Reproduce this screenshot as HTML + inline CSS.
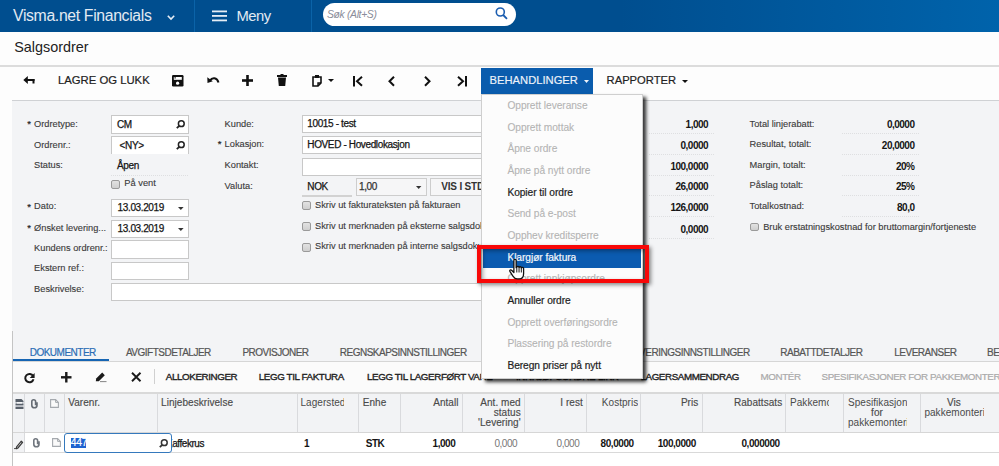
<!DOCTYPE html>
<html><head><meta charset="utf-8"><style>
html,body{margin:0;padding:0;}
body{width:999px;height:466px;overflow:hidden;position:relative;background:#fdfdfd;font-family:"Liberation Sans",sans-serif;}
.t{position:absolute;line-height:1;white-space:nowrap;}
svg{overflow:visible}
</style></head><body>
<div style="position:absolute;left:0px;top:0px;width:999px;height:32px;background:linear-gradient(to right,#004e8f 0px,#004e8f 620px,#0063ab 999px);"></div>
<div style="position:absolute;left:193.8px;top:0px;width:1.5px;height:32px;background:#0b63a8;"></div>
<div style="position:absolute;left:310.8px;top:0px;width:1.5px;height:32px;background:#0b63a8;"></div>
<div class="t" style="top:8.13px;font-size:15.8px;color:#e2eaf3;letter-spacing:-0.35px;left:13px;">Visma.net Financials</div>
<svg style="position:absolute;left:167px;top:15px" width="8" height="5" viewBox="0 0 8 5"><path d="M0.8 0.8 L4 4 L7.2 0.8" fill="none" stroke="#e6edf5" stroke-width="1.6"/></svg>
<svg style="position:absolute;left:212px;top:10px" width="15" height="12" viewBox="0 0 15 12"><rect x="0" y="0.5" width="15" height="1.8" fill="#e6edf5"/><rect x="0" y="5" width="15" height="1.8" fill="#e6edf5"/><rect x="0" y="9.5" width="15" height="1.8" fill="#e6edf5"/></svg>
<div class="t" style="top:9.47px;font-size:14.8px;color:#e2eaf3;letter-spacing:-0.5px;left:236.5px;">Meny</div>
<div style="position:absolute;left:323px;top:3px;width:193px;height:23px;background:#fff;border-radius:12px;"></div>
<div class="t" style="top:9.50px;font-size:10.4px;color:#8a8d99;letter-spacing:-0.35px;font-style:italic;left:327px;">Søk (Alt+S)</div>
<svg style="position:absolute;left:495px;top:7px" width="14" height="13" viewBox="0 0 14 13"><circle cx="5.3" cy="5" r="4" fill="none" stroke="#1b5db0" stroke-width="1.6"/><path d="M8.2 8 L12 11.8" stroke="#1b5db0" stroke-width="1.8"/></svg>
<div class="t" style="top:40.41px;font-size:14.4px;color:#222;left:14.2px;">Salgsordrer</div>
<div style="position:absolute;left:0px;top:65px;width:999px;height:2px;background:#dcdcdc;"></div>
<svg style="position:absolute;left:22.5px;top:76px" width="12" height="9" viewBox="0 0 12 9"><path d="M0.3 4 L4.8 0 V8 Z" fill="#111"/><rect x="3.5" y="3" width="8" height="2" fill="#111"/><rect x="9.5" y="3" width="2" height="4.5" fill="#111"/></svg>
<div class="t" style="top:75.23px;font-size:11.3px;color:#222;left:58px;-webkit-text-stroke:0.2px #222;">LAGRE OG LUKK</div>
<svg style="position:absolute;left:171.5px;top:75px" width="11.5" height="11.5" viewBox="0 0 11.5 11.5"><rect x="0" y="0" width="11.5" height="11.5" rx="1.2" fill="#111"/><rect x="1.8" y="2" width="8" height="2.8" fill="#fff"/><rect x="2.6" y="1.6" width="1" height="2" fill="#111"/><circle cx="5.6" cy="8.2" r="1.6" fill="#fff"/></svg>
<svg style="position:absolute;left:206.5px;top:76.3px" width="12.5" height="8" viewBox="0 0 12.5 8"><path d="M3 4.5 C5 1.2 10 1 11.5 6.5" fill="none" stroke="#111" stroke-width="2"/><path d="M0.3 1.2 L0.5 7 L5.8 5.2 Z" fill="#111"/></svg>
<svg style="position:absolute;left:242px;top:74.8px" width="11" height="11" viewBox="0 0 11 11"><rect x="4.2" y="0" width="2.6" height="11" fill="#111"/><rect x="0" y="4.2" width="11" height="2.6" fill="#111"/></svg>
<svg style="position:absolute;left:276.5px;top:74px" width="10" height="12" viewBox="0 0 10 12"><rect x="0" y="1" width="10" height="2" fill="#111"/><rect x="3.5" y="0" width="3" height="2" fill="#111"/><path d="M1 3.5 H9 L8.2 12 H1.8 Z" fill="#111"/></svg>
<svg style="position:absolute;left:311.5px;top:74.7px" width="10" height="11.5" viewBox="0 0 10 11.5"><path d="M1 2 H9 V8 L6 11 H1 Z" fill="none" stroke="#111" stroke-width="1.6"/><rect x="3" y="0" width="4" height="3" fill="#111"/><path d="M6 11 V8 H9" fill="none" stroke="#111" stroke-width="1.4"/></svg>
<svg style="position:absolute;left:328px;top:79px" width="6" height="3" viewBox="0 0 6 3"><path d="M0 0 H6 L3 3 Z" fill="#111"/></svg>
<svg style="position:absolute;left:353px;top:75.8px" width="10" height="10.5" viewBox="0 0 10 10.5"><rect x="0" y="0" width="2" height="10.5" fill="#111"/><path d="M9 0.8 L4 5.25 L9 9.7" fill="none" stroke="#111" stroke-width="2"/></svg>
<svg style="position:absolute;left:387.5px;top:75.8px" width="7" height="10.5" viewBox="0 0 7 10.5"><path d="M6 0.8 L1.5 5.25 L6 9.7" fill="none" stroke="#111" stroke-width="2"/></svg>
<svg style="position:absolute;left:423.5px;top:75.8px" width="7" height="10.5" viewBox="0 0 7 10.5"><path d="M1 0.8 L5.5 5.25 L1 9.7" fill="none" stroke="#111" stroke-width="2"/></svg>
<svg style="position:absolute;left:457px;top:75.8px" width="10" height="10.5" viewBox="0 0 10 10.5"><rect x="8" y="0" width="2" height="10.5" fill="#111"/><path d="M1 0.8 L6 5.25 L1 9.7" fill="none" stroke="#111" stroke-width="2"/></svg>
<div style="position:absolute;left:481px;top:68px;width:112px;height:26px;background:#0a5cad;"></div>
<div class="t" style="top:75.12px;font-size:11.2px;color:#eef3fa;left:489.6px;-webkit-text-stroke:0.15px #eef3fa;">BEHANDLINGER</div>
<svg style="position:absolute;left:584px;top:80px" width="5" height="3" viewBox="0 0 5 3"><path d="M0 0 H5 L2.5 3 Z" fill="#eef3fa"/></svg>
<div class="t" style="top:75.12px;font-size:11.2px;color:#222;left:606.6px;-webkit-text-stroke:0.2px #222;">RAPPORTER</div>
<svg style="position:absolute;left:681.5px;top:80px" width="6" height="3" viewBox="0 0 6 3"><path d="M0 0 H6 L3 3 Z" fill="#111"/></svg>
<div style="position:absolute;left:12px;top:100px;width:987px;height:366px;background:#f3f4f6;"></div>
<div style="position:absolute;left:12px;top:100px;width:987px;height:1px;background:#cfd1d4;"></div>
<div class="t" style="top:118.96px;font-size:9.5px;color:#222;left:27.2px;-webkit-text-stroke:0.2px #222;">*</div>
<div class="t" style="top:119.57px;font-size:9.25px;color:#3a3a3a;left:34.1px;-webkit-text-stroke:0.12px #3a3a3a;">Ordretype:</div>
<div class="t" style="top:140.77px;font-size:9.25px;color:#3a3a3a;left:34.1px;-webkit-text-stroke:0.12px #3a3a3a;">Ordrenr.:</div>
<div class="t" style="top:161.17px;font-size:9.25px;color:#3a3a3a;left:34.1px;-webkit-text-stroke:0.12px #3a3a3a;">Status:</div>
<div class="t" style="top:201.86px;font-size:9.5px;color:#222;left:27.2px;-webkit-text-stroke:0.2px #222;">*</div>
<div class="t" style="top:202.47px;font-size:9.25px;color:#3a3a3a;left:34.1px;-webkit-text-stroke:0.12px #3a3a3a;">Dato:</div>
<div class="t" style="top:223.06px;font-size:9.5px;color:#222;left:27.2px;-webkit-text-stroke:0.2px #222;">*</div>
<div class="t" style="top:223.67px;font-size:9.25px;color:#3a3a3a;left:34.1px;-webkit-text-stroke:0.12px #3a3a3a;">Ønsket levering...</div>
<div class="t" style="top:243.97px;font-size:9.25px;color:#3a3a3a;left:34.1px;-webkit-text-stroke:0.12px #3a3a3a;">Kundens ordrenr.:</div>
<div class="t" style="top:264.17px;font-size:9.25px;color:#3a3a3a;left:34.1px;-webkit-text-stroke:0.12px #3a3a3a;">Ekstern ref.:</div>
<div class="t" style="top:285.47px;font-size:9.25px;color:#3a3a3a;left:34.1px;-webkit-text-stroke:0.12px #3a3a3a;">Beskrivelse:</div>
<div style="position:absolute;left:111px;top:115px;width:78px;height:19px;background:#fff;border:1px solid #c8c8c8;box-sizing:border-box;"></div>
<div class="t" style="top:119.84px;font-size:10px;color:#141414;letter-spacing:-0.37px;left:117px;-webkit-text-stroke:0.25px #141414;">CM</div>
<svg style="position:absolute;left:176px;top:120px" width="9" height="9" viewBox="0 0 9 9"><circle cx="5.3" cy="3.7" r="2.9" fill="none" stroke="#222" stroke-width="1.5"/><path d="M3.2 5.8 L0.8 8.2" stroke="#222" stroke-width="1.8"/></svg>
<div style="position:absolute;left:111px;top:136px;width:78px;height:18px;background:#fff;border:1px solid #c8c8c8;border-bottom:none;box-sizing:border-box;"></div>
<div class="t" style="top:140.73px;font-size:10px;color:#141414;letter-spacing:-0.37px;left:119.6px;-webkit-text-stroke:0.25px #141414;">&lt;NY&gt;</div>
<svg style="position:absolute;left:176px;top:140.5px" width="9" height="9" viewBox="0 0 9 9"><circle cx="5.3" cy="3.7" r="2.9" fill="none" stroke="#222" stroke-width="1.5"/><path d="M3.2 5.8 L0.8 8.2" stroke="#222" stroke-width="1.8"/></svg>
<div class="t" style="top:161.34px;font-size:10px;color:#141414;letter-spacing:-0.37px;left:117px;-webkit-text-stroke:0.25px #141414;">Åpen</div>
<div style="position:absolute;left:111px;top:175px;width:78px;height:1px;background-image:linear-gradient(to right,#dedfe1 50%,transparent 50%);background-size:2px 1px;"></div>
<div style="position:absolute;left:111px;top:180px;width:9px;height:8.5px;border:1px solid #9a9a9a;border-radius:2px;background:linear-gradient(#e2e2e2,#cfcfcf);box-sizing:border-box;"></div>
<div class="t" style="top:179.33px;font-size:9.3px;color:#3a3a3a;left:124.3px;-webkit-text-stroke:0.12px #3a3a3a;">På vent</div>
<div style="position:absolute;left:111px;top:199px;width:78px;height:18px;background:#fff;border:1px solid #c8c8c8;box-sizing:border-box;"></div>
<div class="t" style="top:202.53px;font-size:10px;color:#141414;letter-spacing:-0.37px;left:117.6px;-webkit-text-stroke:0.25px #141414;">13.03.2019</div>
<svg style="position:absolute;left:177.7px;top:207.3px" width="5.6" height="3" viewBox="0 0 5.6 3"><path d="M0 0 H5.6 L2.8 3 Z" fill="#333"/></svg>
<div style="position:absolute;left:111px;top:220px;width:78px;height:18px;background:#fff;border:1px solid #c8c8c8;box-sizing:border-box;"></div>
<div class="t" style="top:223.53px;font-size:10px;color:#141414;letter-spacing:-0.37px;left:117.6px;-webkit-text-stroke:0.25px #141414;">13.03.2019</div>
<svg style="position:absolute;left:177.7px;top:228.3px" width="5.6" height="3" viewBox="0 0 5.6 3"><path d="M0 0 H5.6 L2.8 3 Z" fill="#333"/></svg>
<div style="position:absolute;left:111px;top:240px;width:78px;height:19px;background:#fff;border:1px solid #c8c8c8;box-sizing:border-box;"></div>
<div style="position:absolute;left:111px;top:262px;width:78px;height:18px;background:#fff;border:1px solid #c8c8c8;box-sizing:border-box;"></div>
<div style="position:absolute;left:111px;top:283px;width:532px;height:18px;background:#fff;border:1px solid #c8c8c8;box-sizing:border-box;"></div>
<div class="t" style="top:119.97px;font-size:9.25px;color:#3a3a3a;left:224.6px;-webkit-text-stroke:0.12px #3a3a3a;">Kunde:</div>
<div class="t" style="top:139.46px;font-size:9.5px;color:#222;left:217.79999999999998px;-webkit-text-stroke:0.2px #222;">*</div>
<div class="t" style="top:140.07px;font-size:9.25px;color:#3a3a3a;left:224.6px;-webkit-text-stroke:0.12px #3a3a3a;">Lokasjon:</div>
<div class="t" style="top:161.07px;font-size:9.25px;color:#3a3a3a;left:224.6px;-webkit-text-stroke:0.12px #3a3a3a;">Kontakt:</div>
<div class="t" style="top:182.07px;font-size:9.25px;color:#3a3a3a;left:224.6px;-webkit-text-stroke:0.12px #3a3a3a;">Valuta:</div>
<div style="position:absolute;left:302px;top:115px;width:340px;height:18px;background:#fff;border:1px solid #c8c8c8;box-sizing:border-box;"></div>
<div class="t" style="top:119.33px;font-size:10px;color:#141414;letter-spacing:-0.37px;left:307.3px;-webkit-text-stroke:0.25px #141414;">10015 - test</div>
<div style="position:absolute;left:302px;top:136px;width:340px;height:18px;background:#fff;border:1px solid #c8c8c8;box-sizing:border-box;"></div>
<div class="t" style="top:140.34px;font-size:10px;color:#141414;letter-spacing:-0.37px;left:307.3px;-webkit-text-stroke:0.25px #141414;">HOVED - Hovedlokasjon</div>
<div style="position:absolute;left:302px;top:158px;width:340px;height:18px;background:#fff;border:1px solid #c8c8c8;box-sizing:border-box;"></div>
<div class="t" style="top:182.13px;font-size:10px;color:#141414;letter-spacing:-0.37px;left:307.3px;-webkit-text-stroke:0.25px #141414;">NOK</div>
<div style="position:absolute;left:302px;top:195px;width:50px;height:1.5px;background:#d2d2d2;"></div>
<div style="position:absolute;left:356px;top:177.5px;width:71px;height:18.5px;background:#f6f6f7;border:1px solid #cdcdcd;box-sizing:border-box;"></div>
<div class="t" style="top:181.53px;font-size:10px;color:#333;letter-spacing:-0.37px;left:359px;-webkit-text-stroke:0.25px #333;">1,00</div>
<svg style="position:absolute;left:416.3px;top:185.5px" width="5.4" height="3" viewBox="0 0 5.4 3"><path d="M0 0 H5.4 L2.7 3 Z" fill="#333"/></svg>
<div style="position:absolute;left:430px;top:177.5px;width:120px;height:18.5px;background:#f6f6f7;border:1px solid #cdcdcd;box-sizing:border-box;"></div>
<div class="t" style="top:181.84px;font-size:10px;color:#333;font-weight:bold;letter-spacing:-0.2px;left:441.3px;">VIS I STD</div>
<div style="position:absolute;left:302px;top:201px;width:9px;height:8.5px;border:1px solid #9a9a9a;border-radius:2px;background:linear-gradient(#e2e2e2,#cfcfcf);box-sizing:border-box;"></div>
<div class="t" style="top:200.77px;font-size:9.25px;color:#3a3a3a;left:315px;-webkit-text-stroke:0.12px #3a3a3a;">Skriv ut fakturateksten på fakturaen</div>
<div style="position:absolute;left:302px;top:222px;width:9px;height:8.5px;border:1px solid #9a9a9a;border-radius:2px;background:linear-gradient(#e2e2e2,#cfcfcf);box-sizing:border-box;"></div>
<div class="t" style="top:221.77px;font-size:9.25px;color:#3a3a3a;left:315px;-webkit-text-stroke:0.12px #3a3a3a;">Skriv ut merknaden på eksterne salgsdokumenter</div>
<div style="position:absolute;left:302px;top:243px;width:9px;height:8.5px;border:1px solid #9a9a9a;border-radius:2px;background:linear-gradient(#e2e2e2,#cfcfcf);box-sizing:border-box;"></div>
<div class="t" style="top:242.27px;font-size:9.25px;color:#3a3a3a;left:315px;-webkit-text-stroke:0.12px #3a3a3a;">Skriv ut merknaden på interne salgsdokumenter</div>
<div class="t" style="top:120.03px;font-size:10px;color:#141414;font-weight:bold;letter-spacing:-0.5px;right:290.9px;text-align:right;">1,000</div>
<div class="t" style="top:140.94px;font-size:10px;color:#141414;font-weight:bold;letter-spacing:-0.5px;right:290.9px;text-align:right;">0,0000</div>
<div class="t" style="top:161.74px;font-size:10px;color:#141414;font-weight:bold;letter-spacing:-0.5px;right:290.9px;text-align:right;">100,0000</div>
<div class="t" style="top:182.03px;font-size:10px;color:#141414;font-weight:bold;letter-spacing:-0.5px;right:290.9px;text-align:right;">26,0000</div>
<div class="t" style="top:203.24px;font-size:10px;color:#141414;font-weight:bold;letter-spacing:-0.5px;right:290.9px;text-align:right;">126,0000</div>
<div class="t" style="top:224.94px;font-size:10px;color:#141414;font-weight:bold;letter-spacing:-0.5px;right:290.9px;text-align:right;">0,0000</div>
<div style="position:absolute;left:649px;top:133px;width:65px;height:1px;background-image:linear-gradient(to right,#dedfe1 50%,transparent 50%);background-size:2px 1px;"></div>
<div style="position:absolute;left:649px;top:154px;width:65px;height:1px;background-image:linear-gradient(to right,#dedfe1 50%,transparent 50%);background-size:2px 1px;"></div>
<div style="position:absolute;left:649px;top:175px;width:65px;height:1px;background-image:linear-gradient(to right,#dedfe1 50%,transparent 50%);background-size:2px 1px;"></div>
<div style="position:absolute;left:649px;top:195px;width:65px;height:1px;background-image:linear-gradient(to right,#dedfe1 50%,transparent 50%);background-size:2px 1px;"></div>
<div style="position:absolute;left:649px;top:216px;width:65px;height:1px;background-image:linear-gradient(to right,#dedfe1 50%,transparent 50%);background-size:2px 1px;"></div>
<div style="position:absolute;left:649px;top:238px;width:65px;height:1px;background-image:linear-gradient(to right,#dedfe1 50%,transparent 50%);background-size:2px 1px;"></div>
<div class="t" style="top:119.67px;font-size:9.25px;color:#3a3a3a;left:749.6px;-webkit-text-stroke:0.12px #3a3a3a;">Total linjerabatt:</div>
<div class="t" style="top:139.97px;font-size:9.25px;color:#3a3a3a;left:749.6px;-webkit-text-stroke:0.12px #3a3a3a;">Resultat, totalt:</div>
<div class="t" style="top:161.17px;font-size:9.25px;color:#3a3a3a;left:749.6px;-webkit-text-stroke:0.12px #3a3a3a;">Margin, totalt:</div>
<div class="t" style="top:181.47px;font-size:9.25px;color:#3a3a3a;left:749.6px;-webkit-text-stroke:0.12px #3a3a3a;">Påslag totalt:</div>
<div class="t" style="top:202.27px;font-size:9.25px;color:#3a3a3a;left:749.6px;-webkit-text-stroke:0.12px #3a3a3a;">Totalkostnad:</div>
<div class="t" style="top:120.03px;font-size:10px;color:#141414;font-weight:bold;letter-spacing:-0.5px;right:84.5px;text-align:right;">0,0000</div>
<div class="t" style="top:140.94px;font-size:10px;color:#141414;font-weight:bold;letter-spacing:-0.5px;right:84.5px;text-align:right;">20,0000</div>
<div class="t" style="top:161.74px;font-size:10px;color:#141414;font-weight:bold;letter-spacing:-0.5px;right:84.5px;text-align:right;">20%</div>
<div class="t" style="top:182.03px;font-size:10px;color:#141414;font-weight:bold;letter-spacing:-0.5px;right:84.5px;text-align:right;">25%</div>
<div class="t" style="top:203.24px;font-size:10px;color:#141414;font-weight:bold;letter-spacing:-0.5px;right:84.5px;text-align:right;">80,0</div>
<div style="position:absolute;left:842px;top:133px;width:77px;height:1px;background-image:linear-gradient(to right,#dedfe1 50%,transparent 50%);background-size:2px 1px;"></div>
<div style="position:absolute;left:842px;top:154px;width:77px;height:1px;background-image:linear-gradient(to right,#dedfe1 50%,transparent 50%);background-size:2px 1px;"></div>
<div style="position:absolute;left:842px;top:175px;width:77px;height:1px;background-image:linear-gradient(to right,#dedfe1 50%,transparent 50%);background-size:2px 1px;"></div>
<div style="position:absolute;left:842px;top:195px;width:77px;height:1px;background-image:linear-gradient(to right,#dedfe1 50%,transparent 50%);background-size:2px 1px;"></div>
<div style="position:absolute;left:842px;top:216px;width:77px;height:1px;background-image:linear-gradient(to right,#dedfe1 50%,transparent 50%);background-size:2px 1px;"></div>
<div style="position:absolute;left:749.6px;top:222.5px;width:9px;height:8.5px;border:1px solid #9a9a9a;border-radius:2px;background:linear-gradient(#e2e2e2,#cfcfcf);box-sizing:border-box;"></div>
<div class="t" style="top:222.57px;font-size:9.25px;color:#3a3a3a;left:763.2px;-webkit-text-stroke:0.12px #3a3a3a;">Bruk erstatningskostnad for bruttomargin/fortjeneste</div>
<div style="position:absolute;left:12px;top:331px;width:1px;height:135px;background:#c4c4c4;"></div>
<div class="t" style="top:348.14px;font-size:10px;color:#2a6db5;letter-spacing:-0.5px;left:29.7px;-webkit-text-stroke:0.2px #2a6db5;">DOKUMENTER</div>
<div style="position:absolute;left:13px;top:358.6px;width:96px;height:2.8px;background:#1665b3;"></div>
<div style="position:absolute;left:13px;top:361px;width:986px;height:1px;background:#d6d6d6;"></div>
<div class="t" style="top:348.14px;font-size:10px;color:#555;letter-spacing:-0.5px;left:125.9px;-webkit-text-stroke:0.2px #555;">AVGIFTSDETALJER</div>
<div class="t" style="top:348.14px;font-size:10px;color:#555;letter-spacing:-0.5px;left:242.4px;-webkit-text-stroke:0.2px #555;">PROVISJONER</div>
<div class="t" style="top:348.14px;font-size:10px;color:#555;letter-spacing:-0.5px;left:339.8px;-webkit-text-stroke:0.2px #555;">REGNSKAPSINNSTILLINGER</div>
<div class="t" style="top:348.14px;font-size:10px;color:#555;letter-spacing:-0.5px;right:249.29999999999995px;text-align:right;-webkit-text-stroke:0.2px #555;">LEVERINGSINNSTILLINGER</div>
<div class="t" style="top:348.14px;font-size:10px;color:#555;letter-spacing:-0.5px;left:780.3px;-webkit-text-stroke:0.2px #555;">RABATTDETALJER</div>
<div class="t" style="top:348.14px;font-size:10px;color:#555;letter-spacing:-0.5px;left:894.3px;-webkit-text-stroke:0.2px #555;">LEVERANSER</div>
<div class="t" style="top:348.14px;font-size:10px;color:#555;letter-spacing:-0.5px;left:987px;-webkit-text-stroke:0.2px #555;">BETALINGER</div>
<div style="position:absolute;left:13px;top:362px;width:986px;height:30px;background:#fbfbfb;"></div>
<svg style="position:absolute;left:23.5px;top:372.5px" width="11" height="10" viewBox="0 0 11 10"><path d="M9.1 3 A4.2 4.2 0 1 0 9.5 6.3" fill="none" stroke="#1a1a1a" stroke-width="2"/><path d="M10.6 0 V4.9 H5.7 Z" fill="#1a1a1a"/></svg>
<svg style="position:absolute;left:60.5px;top:371.5px" width="10.5" height="10.5" viewBox="0 0 10.5 10.5"><rect x="4.1" y="0" width="2.4" height="10.5" fill="#1a1a1a"/><rect x="0" y="4.1" width="10.5" height="2.4" fill="#1a1a1a"/></svg>
<svg style="position:absolute;left:94.5px;top:372px" width="12" height="10" viewBox="0 0 12 10"><path d="M0.8 9.3 L1.2 6.6 L7.2 0.6 L9.8 3.2 L3.8 9.2 Z" fill="#1a1a1a"/><rect x="5" y="9.2" width="6.5" height="0.9" fill="#777"/></svg>
<svg style="position:absolute;left:131px;top:372px" width="10.5" height="10" viewBox="0 0 10.5 10"><path d="M1 0.8 L9.5 9.2 M9.5 0.8 L1 9.2" stroke="#1a1a1a" stroke-width="1.9"/></svg>
<div style="position:absolute;left:154px;top:369px;width:1px;height:15px;background:#d0d0d0;"></div>
<div class="t" style="top:372.30px;font-size:9.8px;color:#222;letter-spacing:-0.4px;left:165.8px;-webkit-text-stroke:0.35px #222;">ALLOKERINGER</div>
<div class="t" style="top:372.30px;font-size:9.8px;color:#222;letter-spacing:-0.4px;left:258.8px;-webkit-text-stroke:0.35px #222;">LEGG TIL FAKTURA</div>
<div class="t" style="top:372.30px;font-size:9.8px;color:#222;letter-spacing:-0.4px;left:367px;-webkit-text-stroke:0.35px #222;">LEGG TIL LAGERFØRT VARE</div>
<div class="t" style="top:372.30px;font-size:9.8px;color:#222;letter-spacing:-0.4px;left:516px;-webkit-text-stroke:0.35px #222;">INNKJØPSORDRE-LINK</div>
<div class="t" style="top:372.30px;font-size:9.8px;color:#222;letter-spacing:-0.4px;right:260px;text-align:right;-webkit-text-stroke:0.35px #222;">LAGERSAMMENDRAG</div>
<div class="t" style="top:372.30px;font-size:9.8px;color:#aaa;letter-spacing:-0.4px;left:760.5px;-webkit-text-stroke:0.2px #aaa;">MONTÉR</div>
<div class="t" style="top:372.30px;font-size:9.8px;color:#aaa;letter-spacing:-0.4px;left:821.6px;-webkit-text-stroke:0.2px #aaa;">SPESIFIKASJONER FOR PAKKEMONTER</div>
<div style="position:absolute;left:13px;top:392px;width:986px;height:2px;background:#d9d9d9;"></div>
<div style="position:absolute;left:13px;top:394px;width:986px;height:38px;background:#f2f3f5;"></div>
<div style="position:absolute;left:13px;top:432px;width:986px;height:1px;background:#d6d6d6;"></div>
<div style="position:absolute;left:13px;top:433px;width:986px;height:19px;background:#fff;"></div>
<div style="position:absolute;left:13px;top:452px;width:986px;height:1px;background:#d9d9d9;"></div>
<div style="position:absolute;left:13px;top:453px;width:986px;height:13px;background:#fff;"></div>
<div style="position:absolute;left:24px;top:394px;width:1px;height:38px;background:#d9dadd;"></div>
<div style="position:absolute;left:44px;top:394px;width:1px;height:38px;background:#d9dadd;"></div>
<div style="position:absolute;left:64px;top:394px;width:1px;height:38px;background:#d9dadd;"></div>
<div style="position:absolute;left:157px;top:394px;width:1px;height:38px;background:#d9dadd;"></div>
<div style="position:absolute;left:297px;top:394px;width:1px;height:38px;background:#d9dadd;"></div>
<div style="position:absolute;left:358px;top:394px;width:1px;height:38px;background:#d9dadd;"></div>
<div style="position:absolute;left:400px;top:394px;width:1px;height:38px;background:#d9dadd;"></div>
<div style="position:absolute;left:462px;top:394px;width:1px;height:38px;background:#d9dadd;"></div>
<div style="position:absolute;left:524px;top:394px;width:1px;height:38px;background:#d9dadd;"></div>
<div style="position:absolute;left:586px;top:394px;width:1px;height:38px;background:#d9dadd;"></div>
<div style="position:absolute;left:640px;top:394px;width:1px;height:38px;background:#d9dadd;"></div>
<div style="position:absolute;left:702px;top:394px;width:1px;height:38px;background:#d9dadd;"></div>
<div style="position:absolute;left:785px;top:394px;width:1px;height:38px;background:#d9dadd;"></div>
<div style="position:absolute;left:843px;top:394px;width:1px;height:38px;background:#d9dadd;"></div>
<div style="position:absolute;left:920px;top:394px;width:1px;height:38px;background:#d9dadd;"></div>
<div class="t" style="top:398.04px;font-size:10px;color:#4a4a4a;letter-spacing:0.05px;left:68.2px;-webkit-text-stroke:0.15px #4a4a4a;">Varenr.</div>
<div class="t" style="top:398.04px;font-size:10px;color:#4a4a4a;letter-spacing:0.05px;left:161.1px;-webkit-text-stroke:0.15px #4a4a4a;">Linjebeskrivelse</div>
<div style="position:absolute;left:298px;top:398.04px;width:46px;height:13.0px;overflow:hidden;"><div style="position:absolute;top:0;left:2.5px;line-height:1;white-space:nowrap;font-size:10px;color:#4a4a4a;letter-spacing:0.05px;">Lagersted</div></div>
<div class="t" style="top:398.04px;font-size:10px;color:#4a4a4a;letter-spacing:0.05px;left:362.7px;-webkit-text-stroke:0.15px #4a4a4a;">Enhe</div>
<div class="t" style="top:398.04px;font-size:10px;color:#4a4a4a;letter-spacing:0.05px;right:540.5px;text-align:right;-webkit-text-stroke:0.15px #4a4a4a;">Antall</div>
<div class="t" style="top:397.84px;font-size:10px;color:#4a4a4a;letter-spacing:0.05px;right:478.29999999999995px;text-align:right;-webkit-text-stroke:0.15px #4a4a4a;">Ant. med</div>
<div class="t" style="top:408.04px;font-size:10px;color:#4a4a4a;letter-spacing:0.05px;right:478.29999999999995px;text-align:right;-webkit-text-stroke:0.15px #4a4a4a;">status</div>
<div class="t" style="top:418.44px;font-size:10px;color:#4a4a4a;letter-spacing:0.05px;right:478.29999999999995px;text-align:right;-webkit-text-stroke:0.15px #4a4a4a;">'Levering'</div>
<div class="t" style="top:398.04px;font-size:10px;color:#4a4a4a;letter-spacing:0.05px;right:416.20000000000005px;text-align:right;-webkit-text-stroke:0.15px #4a4a4a;">I rest</div>
<div style="position:absolute;left:587px;top:398.04px;width:50.5px;height:13.0px;overflow:hidden;"><div style="position:absolute;top:0;left:14.799999999999955px;line-height:1;white-space:nowrap;font-size:10px;color:#4a4a4a;letter-spacing:0.05px;">Kostpris</div></div>
<div class="t" style="top:398.04px;font-size:10px;color:#4a4a4a;letter-spacing:0.05px;right:300.70000000000005px;text-align:right;-webkit-text-stroke:0.15px #4a4a4a;">Pris</div>
<div class="t" style="top:398.04px;font-size:10px;color:#4a4a4a;letter-spacing:0.05px;right:216.79999999999995px;text-align:right;-webkit-text-stroke:0.15px #4a4a4a;">Rabattsats</div>
<div style="position:absolute;left:786px;top:398.04px;width:43px;height:13.0px;overflow:hidden;"><div style="position:absolute;top:0;left:4px;line-height:1;white-space:nowrap;font-size:10px;color:#4a4a4a;letter-spacing:0.05px;">Pakkemontering</div></div>
<div style="position:absolute;left:846px;top:397.84px;width:60.5px;height:13.0px;overflow:hidden;"><div style="position:absolute;top:0;left:2px;line-height:1;white-space:nowrap;font-size:10px;color:#4a4a4a;letter-spacing:0.05px;">Spesifikasjon</div></div>
<div class="t" style="top:408.04px;font-size:10px;color:#4a4a4a;letter-spacing:0.05px;left:677px;width:400px;text-align:center;-webkit-text-stroke:0.15px #4a4a4a;">for</div>
<div style="position:absolute;left:846px;top:418.44px;width:60.5px;height:13.0px;overflow:hidden;"><div style="position:absolute;top:0;left:2px;line-height:1;white-space:nowrap;font-size:10px;color:#4a4a4a;letter-spacing:0.05px;">pakkemontering</div></div>
<div class="t" style="top:397.84px;font-size:10px;color:#4a4a4a;letter-spacing:0.05px;left:754px;width:400px;text-align:center;-webkit-text-stroke:0.15px #4a4a4a;">Vis</div>
<div style="position:absolute;left:922px;top:408.04px;width:62px;height:13.0px;overflow:hidden;"><div style="position:absolute;top:0;left:2.3999999999999773px;line-height:1;white-space:nowrap;font-size:10px;color:#4a4a4a;letter-spacing:0.05px;">pakkemontering</div></div>
<div class="t" style="top:438.64px;font-size:10px;color:#141414;letter-spacing:-0.45px;left:166px;-webkit-text-stroke:0.25px #141414;">Kaffekrus</div>
<div class="t" style="top:438.64px;font-size:10px;color:#141414;font-weight:bold;letter-spacing:-0.45px;left:304px;">1</div>
<div class="t" style="top:438.64px;font-size:10px;color:#141414;font-weight:bold;letter-spacing:-0.45px;left:365.7px;">STK</div>
<div class="t" style="top:438.64px;font-size:10px;color:#141414;font-weight:bold;letter-spacing:-0.45px;right:543.7px;text-align:right;">1,000</div>
<div class="t" style="top:438.64px;font-size:10px;color:#777;letter-spacing:-0.45px;right:481.79999999999995px;text-align:right;">0,000</div>
<div class="t" style="top:438.64px;font-size:10px;color:#777;letter-spacing:-0.45px;right:419.70000000000005px;text-align:right;">0,000</div>
<div class="t" style="top:438.64px;font-size:10px;color:#141414;font-weight:bold;letter-spacing:-0.45px;right:365.4px;text-align:right;">80,0000</div>
<div class="t" style="top:438.64px;font-size:10px;color:#141414;font-weight:bold;letter-spacing:-0.45px;right:303.20000000000005px;text-align:right;">100,0000</div>
<div class="t" style="top:438.64px;font-size:10px;color:#141414;font-weight:bold;letter-spacing:-0.45px;right:219.39999999999998px;text-align:right;">0,000000</div>
<svg style="position:absolute;left:14.5px;top:398.5px" width="9" height="10" viewBox="0 0 9 10"><path d="M0.5 0 H6.5 L8.5 2 V10 H0.5 Z" fill="#58606a"/><rect x="-0.3" y="3.2" width="9.3" height="1.3" fill="#e8eaee"/><rect x="-0.3" y="6.4" width="9.3" height="1.3" fill="#e8eaee"/><rect x="2" y="3.2" width="5" height="1.3" fill="#fff"/></svg>
<svg style="position:absolute;left:30.7px;top:398.8px" width="8" height="9" viewBox="0 0 8 9"><path d="M6 3.2 V6.2 A2.6 2.6 0 0 1 0.8 6.2 V2.6 A1.9 1.9 0 0 1 4.6 2.6 V6.3" fill="none" stroke="#666c74" stroke-width="1.6"/></svg>
<svg style="position:absolute;left:50.2px;top:399px" width="9" height="9" viewBox="0 0 9 9"><path d="M0.6 0.6 H5.6 L8.4 3.4 V8.4 H0.6 Z" fill="#fafafa" stroke="#a5a9ae" stroke-width="1.1"/><path d="M5.6 0.6 V3.4 H8.4" fill="none" stroke="#a5a9ae" stroke-width="1"/></svg>
<div style="position:absolute;left:13px;top:433px;width:11px;height:19px;background:#f2f3f5;"></div>
<div style="position:absolute;left:24px;top:433px;width:1px;height:19px;background:#d9dadd;"></div>
<svg style="position:absolute;left:14.2px;top:440px" width="9.5" height="9" viewBox="0 0 9.5 9"><path d="M2.6 6.8 L7.3 1.2 L8.6 2.4 L3.9 8 L2.2 8.6 Z" fill="none" stroke="#3a3a3a" stroke-width="1.2" stroke-linejoin="round"/><path d="M0 8.6 H3.5" stroke="#3a3a3a" stroke-width="0.9"/></svg>
<svg style="position:absolute;left:32.5px;top:437.8px" width="8" height="9" viewBox="0 0 8 9"><path d="M6 3.2 V6.2 A2.6 2.6 0 0 1 0.8 6.2 V2.6 A1.9 1.9 0 0 1 4.6 2.6 V6.3" fill="none" stroke="#70767e" stroke-width="1.6"/></svg>
<svg style="position:absolute;left:52px;top:437.6px" width="9" height="9" viewBox="0 0 9 9"><path d="M0.6 0.6 H5.6 L8.4 3.4 V8.4 H0.6 Z" fill="#fafafa" stroke="#a5a9ae" stroke-width="1.1"/><path d="M5.6 0.6 V3.4 H8.4" fill="none" stroke="#a5a9ae" stroke-width="1"/></svg>
<div style="position:absolute;left:64px;top:432.8px;width:108px;height:20.2px;background:#fff;border:1.8px solid #3579bd;border-radius:3px;box-sizing:border-box;"></div>
<div style="position:absolute;left:70.6px;top:437.5px;width:15.6px;height:10.2px;background:#1f63d0;"></div>
<div class="t" style="top:438.10px;font-size:10.4px;color:#fff;letter-spacing:-0.3px;left:70.8px;-webkit-text-stroke:0.15px #fff;">447</div>
<svg style="position:absolute;left:159px;top:438.5px" width="9" height="9" viewBox="0 0 9 9"><circle cx="5.3" cy="3.7" r="2.9" fill="none" stroke="#333" stroke-width="1.5"/><path d="M3.2 5.8 L0.8 8.2" stroke="#333" stroke-width="1.8"/></svg>
<div style="position:absolute;left:481px;top:94px;width:162px;height:285px;background:#fcfcfc;border:1px solid #cfcfcf;box-sizing:border-box;box-shadow:3.5px 3px 3.5px rgba(0,0,0,0.78);"></div>
<div class="t" style="top:101.17px;font-size:10.2px;color:#b4b4b4;letter-spacing:-0.05px;left:507.4px;-webkit-text-stroke:0.1px #b4b4b4;">Opprett leveranse</div>
<div class="t" style="top:122.82px;font-size:10.2px;color:#b4b4b4;letter-spacing:-0.05px;left:507.4px;-webkit-text-stroke:0.1px #b4b4b4;">Opprett mottak</div>
<div class="t" style="top:144.47px;font-size:10.2px;color:#b4b4b4;letter-spacing:-0.05px;left:507.4px;-webkit-text-stroke:0.1px #b4b4b4;">Åpne ordre</div>
<div class="t" style="top:166.12px;font-size:10.2px;color:#b4b4b4;letter-spacing:-0.05px;left:507.4px;-webkit-text-stroke:0.1px #b4b4b4;">Åpne på nytt ordre</div>
<div class="t" style="top:187.77px;font-size:10.2px;color:#222;letter-spacing:-0.05px;left:507.4px;-webkit-text-stroke:0.2px #222;">Kopier til ordre</div>
<div class="t" style="top:209.42px;font-size:10.2px;color:#b4b4b4;letter-spacing:-0.05px;left:507.4px;-webkit-text-stroke:0.1px #b4b4b4;">Send på e-post</div>
<div class="t" style="top:231.07px;font-size:10.2px;color:#b4b4b4;letter-spacing:-0.05px;left:507.4px;-webkit-text-stroke:0.1px #b4b4b4;">Opphev kreditsperre</div>
<div style="position:absolute;left:483px;top:249px;width:158px;height:18.5px;background:#0b5bb0;"></div>
<div class="t" style="top:252.72px;font-size:10.2px;color:#f4f7fb;letter-spacing:-0.05px;left:507.4px;-webkit-text-stroke:0.2px #f4f7fb;">Klargjør faktura</div>
<div class="t" style="top:274.37px;font-size:10.2px;color:#b4b4b4;letter-spacing:-0.05px;left:507.4px;-webkit-text-stroke:0.1px #b4b4b4;">Opprett innkjøpsordre</div>
<div class="t" style="top:296.02px;font-size:10.2px;color:#222;letter-spacing:-0.05px;left:507.4px;-webkit-text-stroke:0.2px #222;">Annuller ordre</div>
<div class="t" style="top:317.67px;font-size:10.2px;color:#b4b4b4;letter-spacing:-0.05px;left:507.4px;-webkit-text-stroke:0.1px #b4b4b4;">Opprett overføringsordre</div>
<div class="t" style="top:339.32px;font-size:10.2px;color:#b4b4b4;letter-spacing:-0.05px;left:507.4px;-webkit-text-stroke:0.1px #b4b4b4;">Plassering på restordre</div>
<div class="t" style="top:360.97px;font-size:10.2px;color:#222;letter-spacing:-0.05px;left:507.4px;-webkit-text-stroke:0.2px #222;">Beregn priser på nytt</div>
<div style="position:absolute;left:477.3px;top:245.3px;width:171.7px;height:37.7px;border:4px solid #f80808;box-sizing:border-box;box-shadow:2px 2px 4px rgba(0,0,0,0.45), inset 2px 2px 4px rgba(0,0,0,0.35);"></div>
<svg style="position:absolute;left:508.6px;top:258.8px" width="18.4" height="21.6" viewBox="0 0 17 20"><path d="M4.5 1.2 C4.5 0 6.6 0 6.6 1.2 V8 L7.2 7.6 C7.5 6.6 9.2 6.6 9.3 7.8 C9.6 6.9 11.3 6.9 11.4 8.2 C11.8 7.4 13.5 7.5 13.5 8.8 V13.5 C13.5 16.5 12 18.5 9.5 18.5 H7.5 C5.5 18.5 4.8 17.5 3.6 15.8 L0.8 11.5 C0.2 10.5 1.6 9.5 2.4 10.4 L4.5 12.5 Z" fill="#fff" stroke="#111" stroke-width="1.2" stroke-linejoin="round"/><path d="M7.2 8 V12.5 M9.3 8 V12.5 M11.4 8.4 V12.5" stroke="#111" stroke-width="0.9"/></svg>
</body></html>
